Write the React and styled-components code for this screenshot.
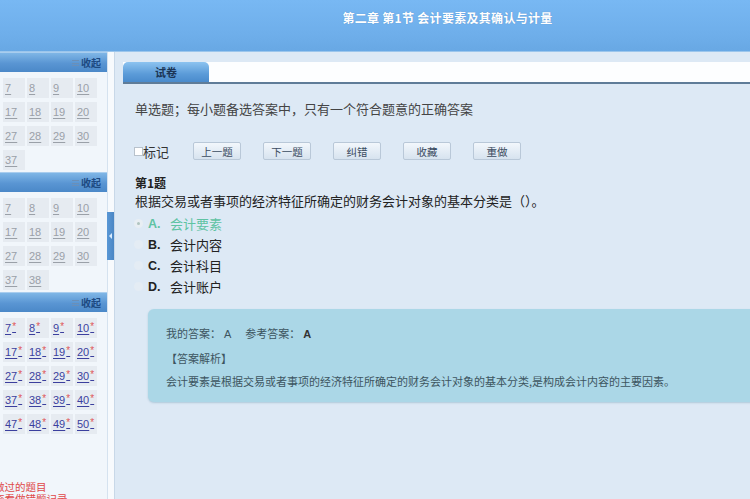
import React from "react";
import styled, { createGlobalStyle } from "styled-components";

const Global = createGlobalStyle`
  html, body { margin: 0; padding: 0; }
  body {
    width: 750px; height: 499px; overflow: hidden;
    font-family: "Noto Sans CJK SC", "Noto Sans", "Liberation Sans", sans-serif;
    background: #dde9f5;
  }
  * { box-sizing: border-box; }
`;

const Page = styled.div`
  width: 750px; height: 499px; display: flex; flex-direction: column; overflow: hidden;
`;

const Header = styled.header`
  height: 52px; flex: none;
  background: linear-gradient(#78b8f3, #6eaeea 70%, #68a8e4);
  border-bottom: 1px solid #9cc6ec;
  display: flex; justify-content: center; padding-top: 9px;
  padding-left: 145px;
`;

const Title = styled.h1`
  margin: 0; font-size: 12px; font-weight: 700; color: #fff; letter-spacing: 0.3px;
  text-shadow: 0 0 1px rgba(40,80,140,0.4);
`;

const Body = styled.div`
  flex: 1; display: flex; min-height: 0;
`;

const Sidebar = styled.aside`
  width: 107px; flex: none; background: #f1f6fb; display: flex; flex-direction: column;
  overflow: hidden; position: relative;
`;

const SectionBar = styled.div`
  height: 20px; background: linear-gradient(#7fb6e6, #5995d3 55%, #4b88c8);
  display: flex; justify-content: flex-end; align-items: center; padding-right: 6px;
  font-size: 10px; color: #1d4a82; font-weight: 700; gap: 2px;
  border-top: 1px solid #a9cdee;
`;

const Collapse = styled.span`
  display: inline-block; width: 7px; height: 6px; border-top: 1px solid #6a8fb8; border-bottom: 1px solid #6a8fb8;
  position: relative;
  &::after { content: ""; position: absolute; left: 0; right: 0; top: 2px; border-top: 1px solid #6a8fb8; }
`;

const Grid = styled.div`
  display: grid; grid-template-columns: repeat(4, 22px); grid-auto-rows: 20px; gap: 4px 2px;
  padding: 6px 0 2px 3px;
`;

const Cell = styled.a`
  background: #e6ebf1; display: flex; align-items: center; justify-content: flex-start; padding-left: 2px;
  font-size: 11px; font-family: "Liberation Sans", sans-serif;
  color: ${p => (p.$done ? "#3b3f9e" : "#9aa0a8")};
  text-decoration: underline; text-underline-offset: 2px;
  white-space: nowrap; overflow: visible;
`;

const Star = styled.span`
  color: #e05858; font-size: 10px; line-height: 10px; align-self: flex-start; margin-top: 4px; margin-left: 1px;
`;

const Legend = styled.div`
  margin-top: auto; margin-left: -6px; margin-bottom: -6px;
  font-size: 10.5px; color: #e04848; line-height: 12px;
`;

const Divider = styled.div`
  width: 8px; flex: none; background: #f7fafd; border-left: 1px solid #d5e2ef; border-right: 1px solid #c8d8e8;
  position: relative;
`;

const Handle = styled.div`
  position: absolute; left: -1px; top: 160px; width: 7px; height: 48px;
  background: linear-gradient(90deg, #5a98d6, #4a86c4);
  display: flex; align-items: center; justify-content: center;
  &::after { content: ""; border-right: 3px solid #d8ecff; border-top: 3px solid transparent; border-bottom: 3px solid transparent; }
`;

const Main = styled.main`
  flex: 1; min-width: 0; overflow: hidden; padding-top: 10px; background: #dde9f5;
`;

const TabBar = styled.div`
  margin-left: 8px; height: 22px; display: flex; background: #fdfeff;
  border-bottom: 2px solid #5f7c98;
`;

const Tab = styled.div`
  width: 86px; height: 20px; border-radius: 5px 5px 0 0;
  background: linear-gradient(#8cc3f0, #5b9bd8 60%, #4a8bcc);
  display: flex; align-items: center; justify-content: center;
  font-size: 11px; font-weight: 700; color: #1b3556;
`;

const Content = styled.div`
  padding: 0 0 0 20px;
`;

const Intro = styled.p`
  margin: 16px 0 0; font-size: 13px; color: #444; line-height: 18px;
`;

const Toolbar = styled.div`
  display: flex; align-items: center; margin-top: 24px; height: 18px;
`;

const MarkLabel = styled.label`
  display: flex; align-items: center; font-size: 13px; color: #333; margin-left: -1px; margin-right: 24px;
`;

const Box = styled.span`
  width: 9px; height: 9px; border: 1px solid #b8c2cc; background: #fff; display: inline-block;
`;

const Btn = styled.button`
  width: 48px; height: 18px; margin-right: 22px; padding: 0;
  border: 1px solid #b9c8d8; border-radius: 2px;
  background: linear-gradient(#f2f7fc, #d7e3ef);
  font-family: inherit; font-size: 10.5px; color: #3a4b60;
`;

const QTitle = styled.div`
  margin-top: 15px; font-size: 12px; font-weight: 700; color: #222; line-height: 16px;
`;

const QText = styled.div`
  font-size: 13px; color: #222; line-height: 20px;
`;

const Options = styled.div`
  display: flex; flex-direction: column; margin-top: 2px;
`;

const Option = styled.div`
  display: flex; align-items: center; height: 21px; font-size: 13px;
  color: ${p => (p.$sel ? "#5fc3a3" : "#222")};
`;

const Radio = styled.span`
  width: 9px; height: 9px; border-radius: 50%; margin: 0 5px 0 -1px;
  background: ${p => (p.$sel ? "#e8eef3" : "#e4ecf4")};
  display: flex; align-items: center; justify-content: center;
  &::after { content: ""; width: 3px; height: 3px; border-radius: 50%; background: ${p => (p.$sel ? "#b0c4c0" : "transparent")}; }
`;

const Letter = styled.b`
  font-family: "Liberation Sans", sans-serif; width: 22px; font-size: 12.5px;
`;

const AnswerBox = styled.div`
  margin: 12px -12px 0 13px; height: 93px; border-radius: 6px;
  background: #abd7e7; padding: 13px 18px 0;
  box-shadow: 0 1px 2px rgba(90,140,170,0.35);
  font-size: 11px; color: #3d5560; line-height: 23.5px;
`;

const Bold = styled.b`
  font-family: "Liberation Sans", sans-serif; font-weight: 700; color: #333; margin-left: 3px;
`;

const Mono = styled.span`
  font-family: "Liberation Sans", sans-serif; margin: 0 14px 0 3px;
`;

const sections = [
  [7, 8, 9, 10, 17, 18, 19, 20, 27, 28, 29, 30, 37],
  [7, 8, 9, 10, 17, 18, 19, 20, 27, 28, 29, 30, 37, 38],
];
const done = [7, 8, 9, 10, 17, 18, 19, 20, 27, 28, 29, 30, 37, 38, 39, 40, 47, 48, 49, 50];

function Bar() {
  return (
    <SectionBar>
      <Collapse />
      收起
    </SectionBar>
  );
}

export default function App() {
  return (
    <Page>
      <Global />
      <Header>
        <Title>第二章 第1节 会计要素及其确认与计量</Title>
      </Header>
      <Body>
        <Sidebar>
          {sections.map((s, i) => (
            <React.Fragment key={i}>
              <Bar />
              <Grid>
                {s.map(n => (
                  <Cell key={n}>{n}</Cell>
                ))}
              </Grid>
            </React.Fragment>
          ))}
          <Bar />
          <Grid>
            {done.map(n => (
              <Cell key={n} $done>
                {n}
                <Star>*</Star>
              </Cell>
            ))}
          </Grid>
          <Legend>
            做过的题目
            <br />
            查看做错题记录
          </Legend>
        </Sidebar>
        <Divider>
          <Handle />
        </Divider>
        <Main>
          <TabBar>
            <Tab>试卷</Tab>
          </TabBar>
          <Content>
            <Intro>单选题；每小题备选答案中，只有一个符合题意的正确答案</Intro>
            <Toolbar>
              <MarkLabel>
                <Box />
                标记
              </MarkLabel>
              <Btn>上一题</Btn>
              <Btn>下一题</Btn>
              <Btn>纠错</Btn>
              <Btn>收藏</Btn>
              <Btn>重做</Btn>
            </Toolbar>
            <QTitle>第1题</QTitle>
            <QText>根据交易或者事项的经济特征所确定的财务会计对象的基本分类是（）。</QText>
            <Options>
              {[
                ["A", "会计要素"],
                ["B", "会计内容"],
                ["C", "会计科目"],
                ["D", "会计账户"],
              ].map(([l, t], i) => (
                <Option key={l} $sel={i === 0}>
                  <Radio $sel={i === 0} />
                  <Letter>{l}.</Letter>
                  {t}
                </Option>
              ))}
            </Options>
            <AnswerBox>
              <div>
                我的答案：<Mono>A</Mono>参考答案：<Bold>A</Bold>
              </div>
              <div>【答案解析】</div>
              <div>会计要素是根据交易或者事项的经济特征所确定的财务会计对象的基本分类,是构成会计内容的主要因素。</div>
            </AnswerBox>
          </Content>
        </Main>
      </Body>
    </Page>
  );
}
